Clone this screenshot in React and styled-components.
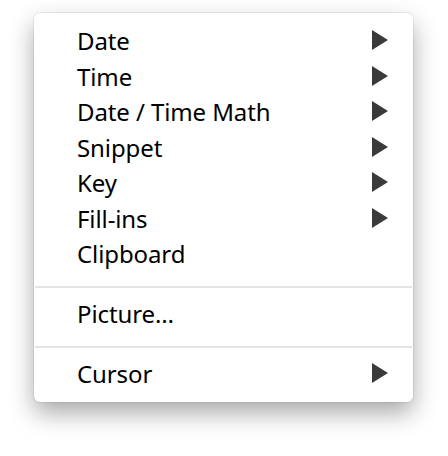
import styled, { createGlobalStyle } from 'styled-components';

const GlobalStyle = createGlobalStyle`
  body {
    margin: 0;
    background: #ffffff;
  }
`;

const Page = styled.div`
  width: 448px;
  height: 456px;
  padding: 13px 35px 0 34px;
  box-sizing: border-box;
`;

const Menu = styled.div`
  background: #ffffff;
  border-radius: 6px;
  padding: 10px 0 10.5px;
  box-shadow: 0 0 0 1px rgba(0, 0, 0, 0.06), 0 11px 24px rgba(0, 0, 0, 0.34);
  font-family: 'Noto Sans', 'DejaVu Sans', sans-serif;
  color: #000000;
`;

const Item = styled.div`
  height: 35.5px;
  display: flex;
  align-items: center;
  justify-content: space-between;
  padding: 0 25px 0 43px;
  font-size: 24px;
  letter-spacing: -0.1px;
`;

const Arrow = styled.span`
  width: 0;
  height: 0;
  margin-bottom: 1px;
  border-top: 10px solid transparent;
  border-bottom: 10px solid transparent;
  border-left: 16px solid #3a3a3a;
`;

const Separator = styled.div`
  height: 2px;
  margin: 14px 1px 8.5px;
  background: #e4e4e4;
`;

const groups = [
  [
    { label: 'Date', sub: true },
    { label: 'Time', sub: true },
    { label: 'Date / Time Math', sub: true },
    { label: 'Snippet', sub: true },
    { label: 'Key', sub: true },
    { label: 'Fill-ins', sub: true },
    { label: 'Clipboard' },
  ],
  [{ label: 'Picture…' }],
  [{ label: 'Cursor', sub: true }],
];

const App = () => (
  <>
    <GlobalStyle />
    <Page>
      <Menu>
        {groups.map((items, i) => (
          <div key={i}>
            {i > 0 && <Separator />}
            {items.map((item) => (
              <Item key={item.label}>
                <span>{item.label}</span>
                {item.sub && <Arrow />}
              </Item>
            ))}
          </div>
        ))}
      </Menu>
    </Page>
  </>
);

export default App;
